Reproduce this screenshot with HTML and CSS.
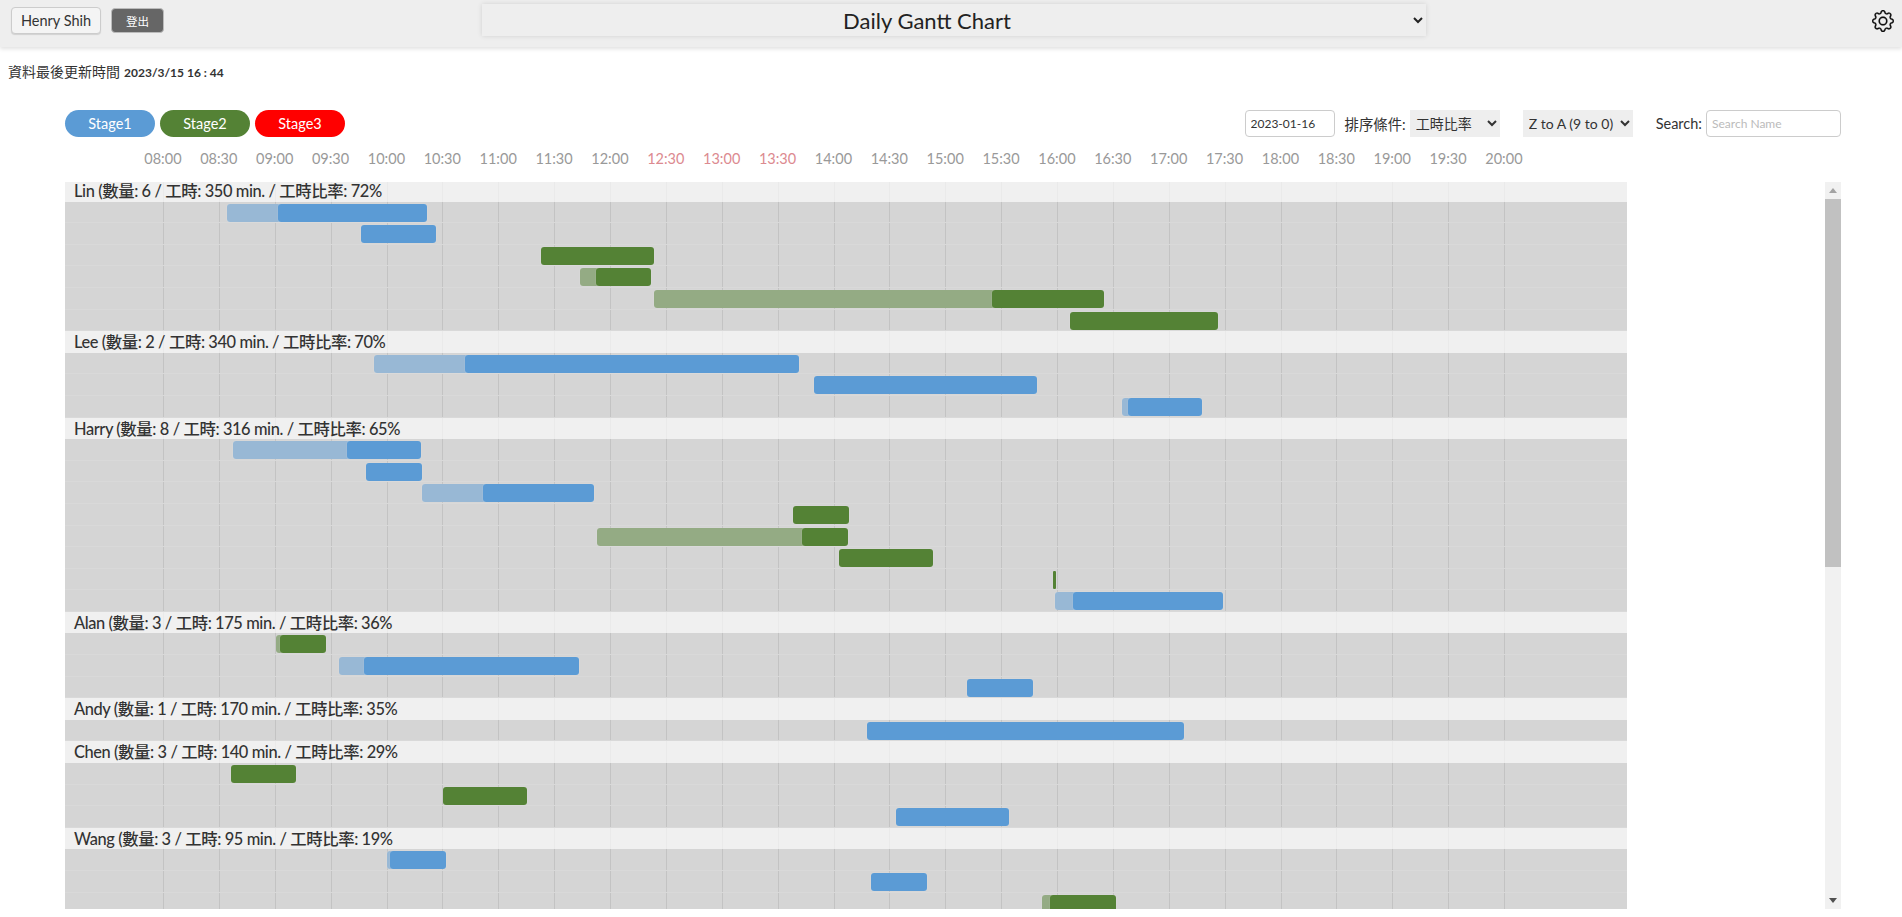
FILE: index.html
```html
<!DOCTYPE html>
<html lang="en">
<head>
<meta charset="UTF-8">
<title>Daily Gantt Chart</title>
<link rel="stylesheet" href="styles.css">
</head>
<body>
<header class="topbar">
    <button class="btn-user">Henry Shih</button>
    <button class="btn-logout">登出</button>
    <select class="page-select">
        <option>Daily Gantt Chart</option>
    </select>
    <svg class="gear" viewBox="0 0 16 16" fill="currentColor">
        <path d="M8 4.754a3.246 3.246 0 1 0 0 6.492 3.246 3.246 0 0 0 0-6.492zM5.754 8a2.246 2.246 0 1 1 4.492 0 2.246 2.246 0 0 1-4.492 0z"/>
        <path d="M9.796 1.343c-.527-1.79-3.065-1.79-3.592 0l-.094.319a.873.873 0 0 1-1.255.52l-.292-.16c-1.64-.892-3.433.902-2.54 2.541l.159.292a.873.873 0 0 1-.52 1.255l-.319.094c-1.79.527-1.79 3.065 0 3.592l.319.094a.873.873 0 0 1 .52 1.255l-.16.292c-.892 1.64.901 3.434 2.541 2.54l.292-.159a.873.873 0 0 1 1.255.52l.094.319c.527 1.79 3.065 1.79 3.592 0l.094-.319a.873.873 0 0 1 1.255-.52l.292.16c1.64.893 3.434-.902 2.54-2.541l-.159-.292a.873.873 0 0 1 .52-1.255l.319-.094c1.79-.527 1.79-3.065 0-3.592l-.319-.094a.873.873 0 0 1-.52-1.255l.16-.292c.893-1.64-.902-3.433-2.541-2.54l-.292.159a.873.873 0 0 1-1.255-.52l-.094-.319zm-2.633.283c.246-.835 1.428-.835 1.674 0l.094.319a1.873 1.873 0 0 0 2.693 1.115l.291-.16c.764-.415 1.6.42 1.184 1.185l-.159.292a1.873 1.873 0 0 0 1.116 2.692l.318.094c.835.246.835 1.428 0 1.674l-.319.094a1.873 1.873 0 0 0-1.115 2.693l.16.291c.415.764-.42 1.6-1.185 1.184l-.291-.159a1.873 1.873 0 0 0-2.693 1.116l-.094.318c-.246.835-1.428.835-1.674 0l-.094-.319a1.873 1.873 0 0 0-2.692-1.115l-.292.16c-.764.415-1.6-.42-1.184-1.185l.159-.291A1.873 1.873 0 0 0 1.945 8.93l-.319-.094c-.835-.246-.835-1.428 0-1.674l.319-.094A1.873 1.873 0 0 0 3.06 4.377l-.16-.292c-.415-.764.42-1.6 1.185-1.184l.292.159a1.873 1.873 0 0 0 2.692-1.115l.094-.319z"/>
    </svg>
</header>

<p class="updated"><span class="updated-label">資料最後更新時間</span> <span class="updated-time">2023/3/15 16 : 44</span></p>

<main class="content">
    <div class="toolbar">
        <div class="legend">
            <span class="pill pill-blue">Stage1</span>
            <span class="pill pill-green">Stage2</span>
            <span class="pill pill-red">Stage3</span>
        </div>
        <div class="filters">
            <input class="date-input" type="text" value="2023-01-16">
            <label class="sort-label">排序條件:</label>
            <select class="filter-select sort-select"><option>工時比率</option></select>
            <select class="filter-select order-select"><option>Z to A (9 to 0)</option></select>
            <label class="search-label">Search:</label>
            <input class="search-input" type="text" placeholder="Search Name">
        </div>
    </div>

    <div class="axis">
        <span>08:00</span><span>08:30</span><span>09:00</span><span>09:30</span><span>10:00</span>
        <span>10:30</span><span>11:00</span><span>11:30</span><span>12:00</span>
        <span class="off">12:30</span><span class="off">13:00</span><span class="off">13:30</span>
        <span>14:00</span><span>14:30</span><span>15:00</span><span>15:30</span><span>16:00</span>
        <span>16:30</span><span>17:00</span><span>17:30</span><span>18:00</span><span>18:30</span>
        <span>19:00</span><span>19:30</span><span>20:00</span>
    </div>

    <div class="chart-wrap">
        <div class="chart">
            <div class="person first">Lin (數量: 6 / 工時: 350 min. / 工時比率: 72%</div>
            <div class="row"><i class="bar blue lead" style="margin-left:161.7px;width:54.3px"></i><i class="bar blue" style="width:149px"></i></div>
            <div class="row"><i class="bar blue" style="margin-left:296.3px;width:74.7px"></i></div>
            <div class="row"><i class="bar green" style="margin-left:476px;width:113px"></i></div>
            <div class="row"><i class="bar green lead" style="margin-left:515px;width:18.6px"></i><i class="bar green" style="width:55.8px"></i></div>
            <div class="row"><i class="bar green lead" style="margin-left:589px;width:341px"></i><i class="bar green" style="width:112px"></i></div>
            <div class="row"><i class="bar green" style="margin-left:1005px;width:148px"></i></div>

            <div class="person">Lee (數量: 2 / 工時: 340 min. / 工時比率: 70%</div>
            <div class="row"><i class="bar blue lead" style="margin-left:308.6px;width:94px"></i><i class="bar blue" style="width:334.8px"></i></div>
            <div class="row"><i class="bar blue" style="margin-left:749px;width:223px"></i></div>
            <div class="row"><i class="bar blue lead" style="margin-left:1057px;width:9px"></i><i class="bar blue" style="width:74px"></i></div>

            <div class="person">Harry (數量: 8 / 工時: 316 min. / 工時比率: 65%</div>
            <div class="row"><i class="bar blue lead" style="margin-left:168px;width:117px"></i><i class="bar blue" style="width:74px"></i></div>
            <div class="row"><i class="bar blue" style="margin-left:301px;width:56px"></i></div>
            <div class="row"><i class="bar blue lead" style="margin-left:357px;width:64px"></i><i class="bar blue" style="width:111px"></i></div>
            <div class="row"><i class="bar green" style="margin-left:728px;width:56px"></i></div>
            <div class="row"><i class="bar green lead" style="margin-left:532px;width:208px"></i><i class="bar green" style="width:46px"></i></div>
            <div class="row"><i class="bar green" style="margin-left:774px;width:94px"></i></div>
            <div class="row"><i class="bar green thin" style="margin-left:988px;width:2.5px"></i></div>
            <div class="row"><i class="bar blue lead" style="margin-left:990px;width:21px"></i><i class="bar blue" style="width:149.7px"></i></div>

            <div class="person">Alan (數量: 3 / 工時: 175 min. / 工時比率: 36%</div>
            <div class="row"><i class="bar green lead" style="margin-left:210.5px;width:7px"></i><i class="bar green" style="width:46.4px"></i></div>
            <div class="row"><i class="bar blue lead" style="margin-left:273.8px;width:28.7px"></i><i class="bar blue" style="width:214.5px"></i></div>
            <div class="row"><i class="bar blue" style="margin-left:902px;width:65.8px"></i></div>

            <div class="person">Andy (數量: 1 / 工時: 170 min. / 工時比率: 35%</div>
            <div class="row"><i class="bar blue" style="margin-left:802px;width:316.5px"></i></div>

            <div class="person">Chen (數量: 3 / 工時: 140 min. / 工時比率: 29%</div>
            <div class="row"><i class="bar green" style="margin-left:166px;width:65.3px"></i></div>
            <div class="row"><i class="bar green" style="margin-left:378px;width:83.6px"></i></div>
            <div class="row"><i class="bar blue" style="margin-left:831px;width:112.6px"></i></div>

            <div class="person">Wang (數量: 3 / 工時: 95 min. / 工時比率: 19%</div>
            <div class="row"><i class="bar blue lead" style="margin-left:321.5px;width:6.3px"></i><i class="bar blue" style="width:55.9px"></i></div>
            <div class="row"><i class="bar blue" style="margin-left:806px;width:56px"></i></div>
            <div class="row"><i class="bar green lead" style="margin-left:977px;width:11px"></i><i class="bar green" style="width:65.6px"></i></div>
        </div>

        <!-- scrollbar of the chart list -->
        <div class="scrollbar">
            <span class="arrow arrow-up"></span>
            <span class="thumb"></span>
            <span class="arrow arrow-down"></span>
        </div>
    </div>
</main>
</body>
</html>
```

FILE: styles.css
```css
* {
    box-sizing: border-box;
}

body {
    margin: 0;
    height: 917px;
    overflow: hidden;
    background: #fff;
    color: #333;
    font-family: 'Lato', 'Noto Sans CJK TC', sans-serif;
}

.topbar {
    display: flex;
    align-items: center;
    height: 47px;
    padding: 0 8px 6px 11px;
    background: #eee;
    box-shadow: 0 2px 4px rgba(0, 0, 0, 0.12);
}

.btn-user {
    width: 90px;
    height: 27px;
    padding: 0;
    background: #f4f4f4;
    border: 1px solid #ccc;
    border-radius: 4px;
    font-family: inherit;
    font-size: 14.5px;
    color: #333;
    box-shadow: 0 1px 1px rgba(0, 0, 0, 0.12);
}

.btn-logout {
    width: 53px;
    height: 25px;
    margin-left: 10px;
    padding: 0;
    background: #666;
    border: 1px solid #bbb;
    border-radius: 4px;
    font-family: inherit;
    font-size: 11.5px;
    color: #fff;
}

.page-select {
    width: 944px;
    height: 32px;
    margin: 0 0 1px 318px;
    padding-right: 42px;
    background: #eee;
    border: none;
    font-family: inherit;
    font-size: 22px;
    color: #222;
    text-align: center;
    text-align-last: center;
    box-shadow: 0 0 5px rgba(0, 0, 0, 0.12);
}

.gear {
    width: 22px;
    height: 22px;
    margin-left: auto;
    color: #111;
    stroke: currentColor;
    stroke-width: 0.15;
}

.updated {
    margin: 14px 0 0 8px;
    height: 20px;
    line-height: 19px;
}

.updated-label {
    font-size: 14px;
}

.updated-time {
    font-size: 12px;
    font-weight: 700;
}

.content {
    padding: 29px 61px 0 65px;
}

.toolbar {
    display: flex;
    justify-content: space-between;
    height: 27px;
}

.legend {
    display: flex;
    gap: 5px;
}

.pill {
    width: 90px;
    height: 27px;
    border-radius: 14px;
    color: #fff;
    font-size: 14.5px;
    line-height: 27px;
    text-align: center;
}

.pill-blue { background: #5b9bd5; }
.pill-green { background: #548235; }
.pill-red { background: #ff0000; }

.filters {
    display: flex;
    align-items: center;
}

.date-input {
    width: 90px;
    height: 27px;
    padding: 0 5px;
    border: 1px solid #ccc;
    border-radius: 4px;
    font-family: inherit;
    font-size: 12px;
    color: #333;
}

.sort-label {
    margin-left: 10px;
    font-size: 14.4px;
}

.filter-select {
    height: 27px;
    padding-left: 2px;
    background: #eee;
    border: none;
    font-family: inherit;
    font-size: 14px;
    color: #333;
}

.sort-select {
    width: 90px;
    margin-left: 4px;
}

.order-select {
    width: 110px;
    margin-left: 23px;
}

.search-label {
    margin-left: 23px;
    font-size: 14.5px;
}

.search-input {
    width: 135px;
    height: 27px;
    margin-left: 4px;
    padding: 0 5px;
    border: 1px solid #ccc;
    border-radius: 4px;
    font-family: inherit;
    font-size: 12px;
}

.search-input::placeholder {
    color: #bbb;
}

.axis {
    display: grid;
    grid-template-columns: repeat(25, 55.88px);
    margin: 11px 0 0 70px;
    height: 34px;
    font-size: 14.5px;
    line-height: 22px;
    color: #999;
    text-align: center;
}

.axis .off {
    color: #dc8a90;
}

.chart-wrap {
    display: flex;
    height: 727px;
}

.chart {
    width: 1562px;
    margin-right: 198px;
    overflow: hidden;
    background-color: #d5d5d5;
    background-image: repeating-linear-gradient(90deg, #c3c3c3 0, #c3c3c3 1px, transparent 1px, transparent 55.88px);
    background-size: 1342px 100%;
    background-position: 98px 0;
    background-repeat: no-repeat;
}

.person {
    height: 21.6px;
    padding-left: 9px;
    background: rgba(255, 255, 255, 0.65);
    font-size: 16.4px;
    font-weight: 500;
    letter-spacing: -0.4px;
    line-height: 21px;
    color: #333;
    white-space: nowrap;
}

.person.first {
    height: 19.6px;
    line-height: 17px;
}

.row {
    display: flex;
    height: 21.6px;
    padding-top: 2px;
    border-bottom: 1px solid #d9d9d9;
}

.bar {
    display: block;
    flex: none;
    height: 18px;
    border-radius: 3px;
    box-shadow: 0 0 1px rgba(255, 255, 255, 0.5);
}

.bar.blue { background: #5b9bd5; }
.bar.green { background: #548235; }

.bar.blue.lead { background: #98b8d5; }
.bar.green.lead { background: #94ab84; }

.bar.lead {
    margin-right: -3px;
}

.bar.thin {
    border-radius: 1px;
}

.scrollbar {
    display: flex;
    flex-direction: column;
    align-items: center;
    width: 16px;
    background: #f1f1f1;
}

.thumb {
    width: 100%;
    height: 368px;
    margin-bottom: auto;
    background: #c1c1c1;
}

.arrow {
    flex: none;
    width: 0;
    height: 0;
    margin: 6px 0;
    border-left: 4px solid transparent;
    border-right: 4px solid transparent;
}

.arrow-up {
    border-bottom: 5px solid #a3a3a3;
}

.arrow-down {
    border-top: 5px solid #505050;
}
```
